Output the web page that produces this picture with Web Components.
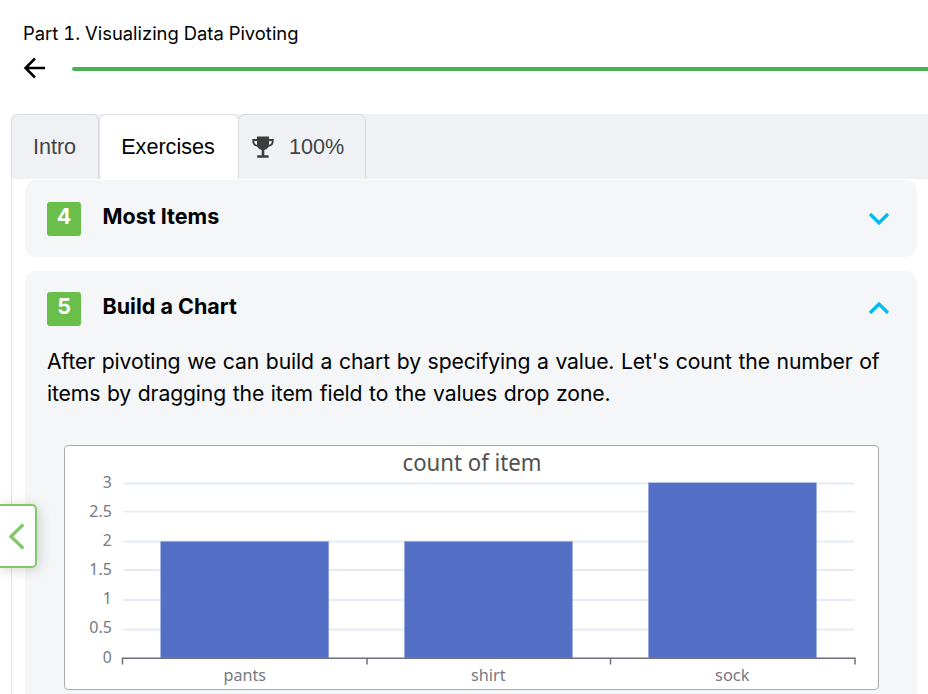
<!DOCTYPE html>
<html lang="en">
<head>
<meta charset="utf-8">
<title>Visualizing Data Pivoting</title>
<style>
  html, body { margin: 0; height: 100%; overflow: hidden; background: #fff; }
</style>
</head>
<body>
<lesson-page></lesson-page>
<script>
class Base extends HTMLElement {
  constructor() {
    super();
    this.attachShadow({ mode: 'open' }).innerHTML =
      '<style>*{box-sizing:border-box}</style>' + this.view();
  }
}

class LessonHeader extends Base {
  view() { return `
    <style>
      :host { display: block; height: 114px; padding: 21px 0 0 23px; color: #000; }
      .title { font-size: 18.4px; line-height: 24px; height: 25px; font-feature-settings: "tnum"; }
      .row { display: flex; align-items: center; gap: 25px; height: 45px; }
      svg { flex: none; width: 24px; height: 24px; margin-top: -1px; }
      .bar { flex: 1; height: 4px; margin-top: 1px; border-radius: 2px 0 0 2px; background: #4caf50; }
    </style>
    <div class="title"><slot></slot></div>
    <div class="row">
      <svg viewBox="0 0 24 24" fill="none" stroke="#000" stroke-width="2.5"><path d="M22 12H3M12 2.5L2.5 12L12 21.5"/></svg>
      <div class="bar"></div>
    </div>`; }
}

class LessonTab extends Base {
  view() { return `
    <style>
      :host { display: flex; align-items: center; justify-content: center; box-sizing: border-box; height: 65px;
        border: 1px solid #d9dade; border-bottom: 0; border-radius: 7px 7px 0 0; background: #f0f1f5;
        color: #444; font: 21.6px/26px "Liberation Sans", Arial, sans-serif; }
      :host([active]) { background: #fff; color: #000; border-color: #dfe0e4; }
    </style><slot></slot>`; }
}

class TrophyIcon extends Base {
  view() { return `
    <style>:host { display: block; width: 22px; height: 22px; } svg { display: block; }</style>
    <svg width="22" height="22" viewBox="0 0 22 22">
      <path d="M5 .5H17V8Q17 13 12.3 14V19.3H16.6V21.7H5.2V19.3H9.7V14Q5 13 5 8Z" fill="#3d3d3d"/>
      <path d="M5.5 4H1.3V5.5Q1.5 9.5 6.3 10M16.5 4H20.7V5.5Q20.5 9.5 15.7 10" fill="none" stroke="#3d3d3d" stroke-width="1.9"/>
    </svg>`; }
}

class TabStrip extends Base {
  view() { return `
    <style>
      :host { display: flex; height: 65px; margin-left: 11px; background: #f0f1f5; border-radius: 7px 0 0 0; }
    </style><slot></slot>`; }
}

class ExerciseCard extends Base {
  view() { return `
    <style>
      :host { display: block; box-sizing: border-box; width: 892px; background: #f4f6f8; border-radius: 11px; padding: 22px 22px 21px; }
      header { display: flex; height: 34px; }
      .num { width: 34px; height: 34px; border-radius: 3px; background: #6abf4b; color: #fff; text-align: center;
        font-size: 21.5px; font-weight: 700; line-height: 29px; }
      .name { margin-left: 21.5px; flex: 1; font-size: 21.5px; font-weight: 700; line-height: 28px; }
      svg { width: 22px; height: 16px; margin: 9px 5px 0 0; }
      :host([open]) { padding-top: 21px; }
      :host([open]) svg { transform: scaleY(-1); margin-top: 8px; }
    </style>
    <header><div class="num"><slot name="num"></slot></div><div class="name"><slot name="name"></slot></div>
    <svg viewBox="0 0 22 16" fill="none" stroke="#00bceb" stroke-width="3.3"><path d="M2 3L11 12L20 3"/></svg></header>
    <slot></slot>`; }
}

class BarChart extends Base {
  view() {
    const ticks = [['3',483.5],['2.5',511.7],['2',541.5],['1.5',570],['1',600],['0.5',629.5]];
    const ys = { '3':487.5,'2.5':516.5,'2':545.5,'1.5':574.8,'1':604,'0.5':633.2,'0':662.5 };
    const w = { '3':9,'2.5':22.5,'2':9,'1.5':22.5,'1':9,'0.5':22.5,'0':9 };
    const grid = ticks.map(([, y]) => `<path d="M123 ${y}H854.5"/>`).join('');
    const labels = Object.keys(ys).map(k => `<text x="111.8" y="${ys[k]}" text-anchor="end" textLength="${w[k]}" lengthAdjust="spacingAndGlyphs">${k}</text>`).join('');
    const bars = [[160.5,541.3],[404.3,541.3],[648.3,482.7]].map(([x, y]) => `<rect x="${x}" y="${y}" width="168.3" height="${658 - y}"/>`).join('');
    const names = [['pants',223.5,42.5],['shirt',471,34.5],['sock',715,34.5]].map(([t, x, l]) => `<text x="${x}" y="681" textLength="${l}" lengthAdjust="spacingAndGlyphs">${t}</text>`).join('');
    return `
    <style>
      :host { display: block; box-sizing: border-box; width: 815px; height: 245px; border: 1px solid #a9abae; border-radius: 4px; background: #fff; overflow: hidden; }
      svg { display: block; }
      text { font-family: "Noto Sans", "Open Sans", sans-serif; }
    </style>
    <svg width="813" height="243" viewBox="65 446 813 243">
      <g stroke="#e6ebf5" stroke-width="1.8">${grid}</g>
      <g fill="#546fc6" stroke="#a9b7e3" stroke-width=".5">${bars}</g>
      <path d="M122.5 664.5V658.2H855V664.5M367 658V664.5M610.5 658V664.5" fill="none" stroke="#6e7079" stroke-width="1.5"/>
      <g font-size="16.9" fill="#777981">${labels}${names}</g>
      <text x="402.5" y="471" font-size="23.4" fill="#505050" textLength="139" lengthAdjust="spacingAndGlyphs">count of item</text>
    </svg>`; }
}

class DrawerHandle extends Base {
  view() { return `
    <style>
      :host { position: absolute; left: -4px; top: 504px; box-sizing: border-box; width: 41px; height: 64px;
        border: 2px solid #80ca66; border-radius: 5px; background: rgba(255,255,255,.88); box-shadow: 2px 2px 14px rgba(0,0,0,.17); }
      svg { display: block; margin: 17px 0 0 10px; }
    </style>
    <svg width="18" height="28" viewBox="0 0 18 28" fill="none" stroke="#80ca66" stroke-width="3.2"><path d="M15.3 1.5L3 13.5L15.3 25.5"/></svg>`; }
}

class LessonPage extends Base {
  view() { return `
    <style>
      :host { display: block; position: relative; width: 928px; height: 694px; overflow: hidden; font-family: Inter, sans-serif; color: #000; }
      .intro { width: 88px; padding-right: 1px; } .ex { width: 140px; padding-right: 2px; } .score { width: 128px; margin-left: -1px; padding-right: 8px; gap: 15px; }
      main { display: flex; flex-direction: column; gap: 14px; height: 530px; margin-left: 11px; padding: 1px 0 0 13px; border-left: 1px solid #e1e2e5; }
      p { margin: 19px 0 0; font-size: 21.2px; line-height: 32px; white-space: nowrap; word-spacing: .9px; letter-spacing: -.15px; }
      bar-chart { margin: 35px 0 0 17px; }
      exercise-card { flex: none; }
    </style>
    <lesson-header>Part 1. Visualizing Data Pivoting</lesson-header>
    <tab-strip>
      <lesson-tab class="intro">Intro</lesson-tab>
      <lesson-tab class="ex" active>Exercises</lesson-tab>
      <lesson-tab class="score"><trophy-icon></trophy-icon><span>100%</span></lesson-tab>
    </tab-strip>
    <main>
      <exercise-card><span slot="num">4</span><span slot="name">Most Items</span></exercise-card>
      <exercise-card open><span slot="num">5</span><span slot="name">Build a Chart</span>
        <p>After pivoting we can build a chart by specifying a value. Let's count the number of<br>items by dragging the item field to the values drop zone.</p>
        <bar-chart style="margin-top:36px"></bar-chart>
      </exercise-card>
    </main>
    <drawer-handle></drawer-handle>`; }
}

customElements.define('lesson-header', LessonHeader);
customElements.define('lesson-tab', LessonTab);
customElements.define('trophy-icon', TrophyIcon);
customElements.define('tab-strip', TabStrip);
customElements.define('exercise-card', ExerciseCard);
customElements.define('bar-chart', BarChart);
customElements.define('drawer-handle', DrawerHandle);
customElements.define('lesson-page', LessonPage);
</script>
</body>
</html>
